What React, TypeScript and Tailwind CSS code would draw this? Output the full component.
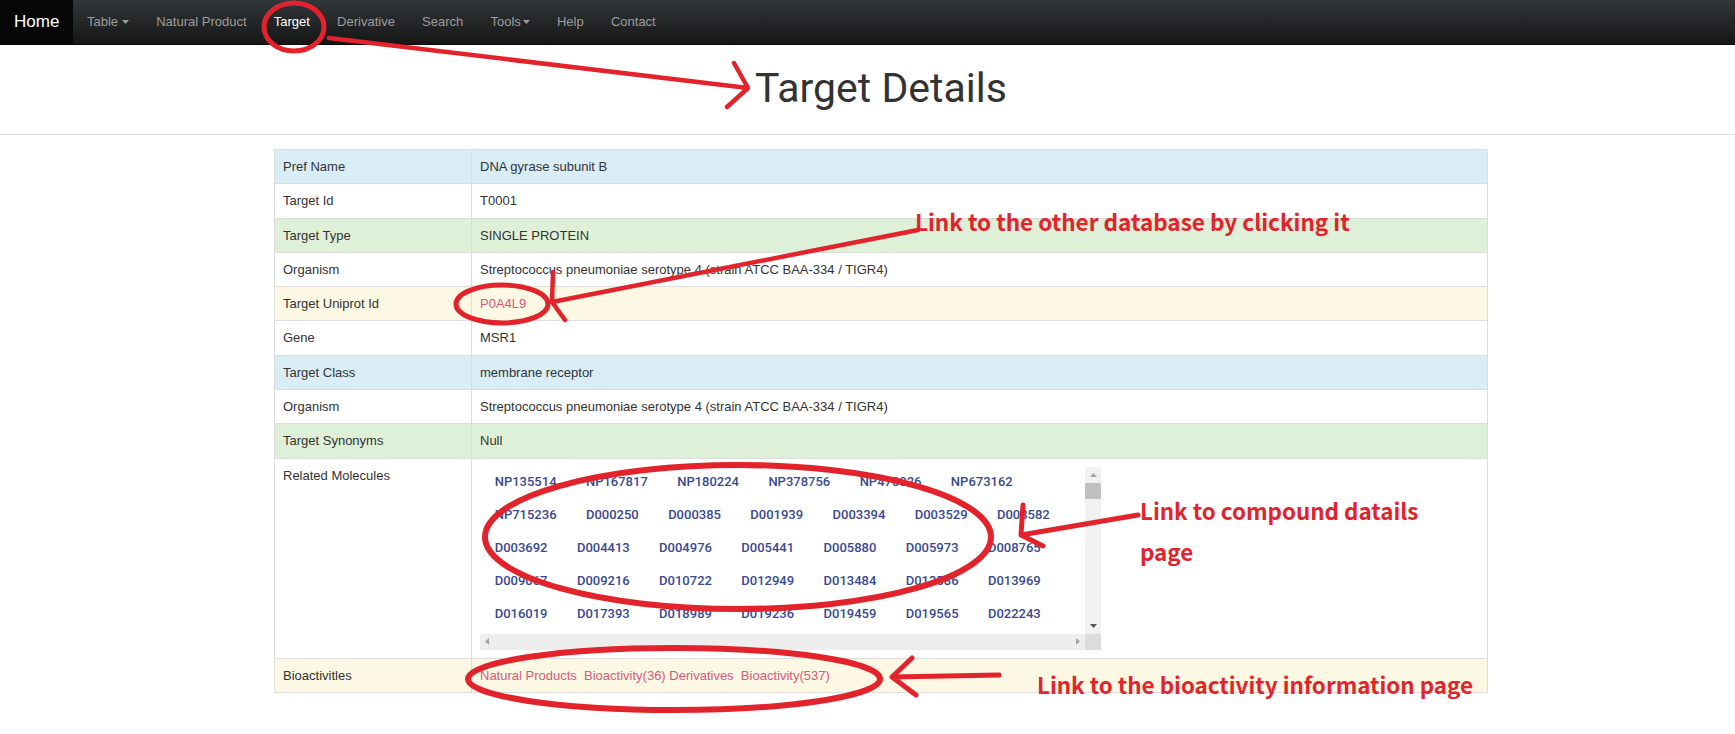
import React from "react";

const navItems = [
  { label: "Table", caret: true, gap: "ml-[4px]" },
  { label: "Natural Product" },
  { label: "Target", active: true },
  { label: "Derivative" },
  { label: "Search" },
  { label: "Tools", caret: true, gap: "ml-[2px]" },
  { label: "Help" },
  { label: "Contact" },
];

const organism = "Streptococcus pneumoniae serotype 4 (strain ATCC BAA-334 / TIGR4)";

const rows: { label: string; value: React.ReactNode; bg: string }[] = [
  { label: "Pref Name", value: "DNA gyrase subunit B", bg: "bg-[#d9edf7]" },
  { label: "Target Id", value: "T0001", bg: "bg-white" },
  { label: "Target Type", value: "SINGLE PROTEIN", bg: "bg-[#dff0d8]" },
  { label: "Organism", value: organism, bg: "bg-white" },
  {
    label: "Target Uniprot Id",
    value: <a className="text-[#d9597c]">P0A4L9</a>,
    bg: "bg-[#fcf8e3]",
  },
  { label: "Gene", value: "MSR1", bg: "bg-white" },
  { label: "Target Class", value: "membrane receptor", bg: "bg-[#d9edf7]" },
  { label: "Organism", value: organism, bg: "bg-white" },
  { label: "Target Synonyms", value: "Null", bg: "bg-[#dff0d8]" },
];

// only the rows that show above the horizontal scrollbar
const molecules = [
  "NP135514", "NP167817", "NP180224", "NP378756", "NP470026", "NP673162",
  "NP715236", "D000250", "D000385", "D001939", "D003394", "D003529", "D003582",
  "D003692", "D004413", "D004976", "D005441", "D005880", "D005973", "D008765",
  "D009067", "D009216", "D010722", "D012949", "D013484", "D013586", "D013969",
  "D016019", "D017393", "D018989", "D019236", "D019459", "D019565", "D022243",
];

function Caret({ gap }: { gap?: string }) {
  return (
    <svg width="7" height="4" viewBox="0 0 7 4" className={"inline-block align-middle " + (gap ?? "")}>
      <path d="M0 0h7L3.5 4z" fill="currentColor" />
    </svg>
  );
}

function Tri({ dir, color }: { dir: "up" | "down" | "left" | "right"; color: string }) {
  const d = {
    up: "M0 4L3.5 0L7 4z",
    down: "M0 0h7L3.5 4z",
    left: "M4 0v7L0 3.5z",
    right: "M0 0v7L4 3.5z",
  }[dir];
  const vert = dir === "up" || dir === "down";
  return (
    <svg width={vert ? 7 : 4} height={vert ? 4 : 7} viewBox={vert ? "0 0 7 4" : "0 0 4 7"}>
      <path d={d} fill={color} />
    </svg>
  );
}

function MoleculeBox() {
  return (
    <div className="flex h-[183px] w-[621px] flex-col">
      <div className="flex min-h-0 flex-1">
        <div className="-mt-[2px] flex flex-1 flex-wrap content-start overflow-hidden">
          {molecules.map((m) => (
            <a
              key={m}
              className="h-[33px] px-[14.7px] font-['Roboto',sans-serif] text-[13px] font-medium leading-[33px] text-[#3a4990]"
            >
              {m}
            </a>
          ))}
        </div>
        <div className="flex w-[16px] flex-col items-center bg-[#f1f1f1]">
          <div className="flex h-[16px] items-center justify-center">
            <Tri dir="up" color="#a3a3a3" />
          </div>
          <div className="h-[16px] w-full bg-[#c1c1c1]" />
          <div className="flex-1" />
          <div className="flex h-[16px] items-center justify-center">
            <Tri dir="down" color="#505050" />
          </div>
        </div>
      </div>
      <div className="flex h-[16px]">
        <div className="flex flex-1 items-center justify-between bg-[#eeeeee] px-[5px]">
          <Tri dir="left" color="#a3a3a3" />
          <Tri dir="right" color="#a3a3a3" />
        </div>
        <div className="w-[16px] bg-[#dcdcdc]" />
      </div>
    </div>
  );
}

function Annotations() {
  const red = "#e3232b";
  return (
    <>
      <svg
        className="pointer-events-none absolute left-0 top-0"
        width="1735"
        height="734"
        viewBox="0 0 1735 734"
        fill="none"
        stroke={red}
        strokeLinecap="round"
        strokeLinejoin="round"
      >
        <ellipse cx="294" cy="27" rx="30" ry="24" strokeWidth="5" />
        <path d="M329 38L748 88M734 63L748 88L727 107" strokeWidth="4.5" />
        <ellipse cx="502" cy="304" rx="46" ry="19" strokeWidth="5" />
        <path d="M918 230L552 302M553 272L552 302L565 320" strokeWidth="4.5" />
        <ellipse cx="738" cy="537" rx="253" ry="72" strokeWidth="6" />
        <path d="M1138 515L1021 535M1023 505L1021 535L1043 546" strokeWidth="5" />
        <ellipse cx="674" cy="679" rx="206" ry="31" strokeWidth="6" />
        <path d="M999 675L892 677M912 658L892 677L916 695" strokeWidth="5" />
      </svg>
      <span className="pointer-events-none absolute left-[915px] top-[210px] whitespace-nowrap font-['Noto_Sans_CJK_SC',sans-serif] text-[22.5px] font-bold leading-none text-[#e3232b]">
        Link to the other database by clicking it
      </span>
      <span className="pointer-events-none absolute left-[1140px] top-[490px] whitespace-nowrap font-['Noto_Sans_CJK_SC',sans-serif] text-[22.4px] font-bold leading-[41px] text-[#e3232b]">
        Link to compound datails
        <br />
        page
      </span>
      <span className="pointer-events-none absolute left-[1037px] top-[673px] whitespace-nowrap font-['Noto_Sans_CJK_SC',sans-serif] text-[22.4px] font-bold leading-none text-[#e3232b]">
        Link to the bioactivity information page
      </span>
    </>
  );
}

export default function App() {
  return (
    <div className="relative min-h-[734px] w-full bg-white font-['Liberation_Sans',Arial,sans-serif] text-[#333]">
      <nav className="flex h-[45px] items-stretch border-b border-[#0c0c0c] bg-gradient-to-b from-[#32373a] to-[#161616]">
        <a className="flex items-center bg-[#060606] px-[14px] text-[17px] text-white">Home</a>
        {navItems.map((n) => (
          <a
            key={n.label}
            className={
              "flex items-center px-[13.6px] text-[13px] " +
              (n.active ? "text-white" : "text-[#9d9d9d]")
            }
          >
            {n.label}
            {n.caret && <Caret gap={n.gap} />}
          </a>
        ))}
      </nav>

      <div className="border-b border-[#dddddd] pb-[23px] pt-[21px] pl-[27px] text-center">
        <h1 className="font-['Roboto',sans-serif] text-[41px] font-normal leading-[45px] text-[#333]">
          Target Details
        </h1>
      </div>

      <div className="flex justify-center pl-[27px] pt-[14px]">
        <table className="w-[1214px] table-fixed border-collapse border border-[#dddddd] text-[13px] leading-[17.3px]">
          <colgroup>
            <col className="w-[197px]" />
            <col />
          </colgroup>
          <tbody>
            {rows.map((r, i) => (
              <tr key={i} className={r.bg}>
                <td className="border border-[#dddddd] px-2 py-2 align-top">{r.label}</td>
                <td className="border border-[#dddddd] px-2 py-2 align-top">{r.value}</td>
              </tr>
            ))}
            <tr className="bg-white">
              <td className="border border-[#dddddd] px-2 py-2 align-top">Related Molecules</td>
              <td className="border border-[#dddddd] px-2 py-2 align-top">
                <MoleculeBox />
              </td>
            </tr>
            <tr className="bg-[#fcf8e3]">
              <td className="border border-[#dddddd] px-2 py-2 align-top">Bioactivitles</td>
              <td className="border border-[#dddddd] px-2 py-2 align-top text-[#d9597c]">
                <a>Natural Products</a>
                {"\u00a0 "}
                <a>Bioactivity(36)</a> <a>Derivatives</a>
                {"\u00a0 "}
                <a>Bioactivity(537)</a>
              </td>
            </tr>
          </tbody>
        </table>
      </div>

      <Annotations />
    </div>
  );
}
